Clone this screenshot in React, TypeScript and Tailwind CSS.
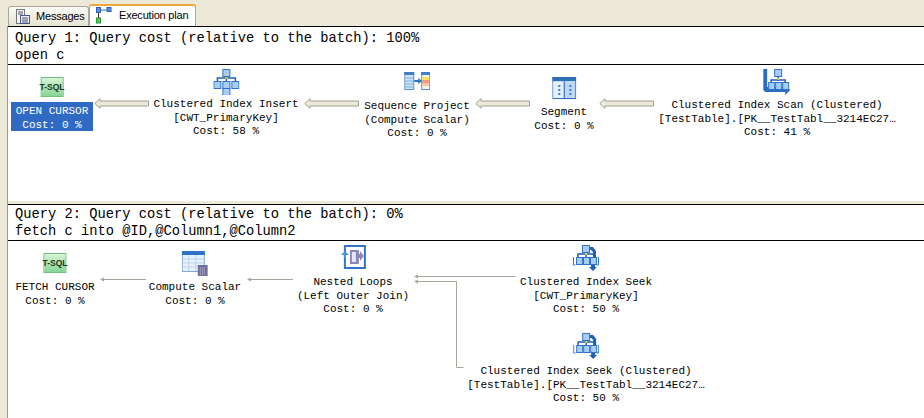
const Box = ({ x, y, w = 7, h = 7 }: { x: number; y: number; w?: number; h?: number }) => (
  <rect x={x + 0.5} y={y + 0.5} width={w} height={h} fill="#a9cdf2" stroke="#2f74c8" />
);

const InsertIcon = () => (
  <svg width="26" height="26" viewBox="0 0 26 26">
    <path d="M13 6v16M4 13V9h18v4" fill="none" stroke="#1f5fb0" strokeWidth="1.5" />
    <path d="M12 8h2v2h-2z" fill="#d8d030" />
    <Box x={9} y={0} />
    <Box x={0} y={12} />
    <Box x={9} y={12} />
    <Box x={18} y={12} />
    <Box x={9} y={19} />
  </svg>
);

const SeekIcon = () => (
  <svg width="26" height="26" viewBox="0 0 26 26">
    <path d="M16 2h4l3 4v6h-3V7l-2-2h-2z" fill="#1f62b8" />
    <path d="M13 6v6M5 13V9h16v4" fill="none" stroke="#1f5fb0" strokeWidth="1.5" />
    <path d="M12 8h2v2h-2z" fill="#d8d030" />
    <Box x={9} y={0} />
    <path d="M.5 12v8h2" fill="none" stroke="#2f74c8" />
    <path d="M25.5 12v8h-2" fill="none" stroke="#2f74c8" />
    <Box x={3} y={12} w={6} />
    <Box x={10} y={12} w={6} />
    <Box x={17} y={12} w={6} />
    <path d="M18 20h4v2h2l-4 4-4-4h2z" fill="#1f62b8" />
  </svg>
);

const ScanIcon = () => (
  <svg width="28" height="27" viewBox="0 0 28 27">
    <path d="M0 0h4v18h18v-2l5 5-5 5v-3H2l-2-2z" fill="#2a6cc4" />
    <path d="M15 7v5M8 14v-3h14v3" fill="none" stroke="#1f5fb0" strokeWidth="1.5" />
    <path d="M14 9h2v2h-2z" fill="#d8d030" />
    <Box x={11} y={0} />
    <Box x={5} y={13} w={6} />
    <Box x={12} y={13} w={6} />
    <Box x={19} y={13} w={6} />
  </svg>
);

const SequenceIcon = () => (
  <svg width="26" height="19" viewBox="0 0 26 19">
    <rect x="0.5" y="0.5" width="9" height="17" fill="#cfe3f7" stroke="#5b92cf" />
    <rect x="0" y="0" width="10" height="3" fill="#3f7fc8" />
    <path d="M1 6h8M1 9h8M1 12h8M1 15h8" stroke="#7fb0e0" />
    <rect x="17.5" y="0.5" width="8" height="17" fill="#f4f4ea" stroke="#5b92cf" />
    <rect x="17" y="0" width="9" height="3" fill="#3f7fc8" />
    <rect x="18" y="5" width="7" height="3" fill="#f3e56a" />
    <rect x="18" y="8" width="7" height="3" fill="#f29a80" />
    <rect x="18" y="11" width="7" height="3" fill="#f6c9a8" />
    <path d="M10 9h6" stroke="#2f74c8" strokeWidth="2" />
    <path d="M14 6l4 3-4 3z" fill="#2f74c8" />
  </svg>
);

const SegmentIcon = () => (
  <svg width="24" height="22" viewBox="0 0 24 22">
    <rect x="0.5" y="0.5" width="23" height="21" fill="#bcd8f4" stroke="#2f6fb8" />
    <rect x="0" y="0" width="24" height="4" fill="#2f6fb8" />
    <rect x="1" y="5" width="10" height="16" fill="#e6f0fa" />
    <path d="M12 1v20" stroke="#2f6fb8" />
    <path d="M6 8h2v2H6zM6 12h2v2H6zM6 16h2v2H6zM17 8h2v2h-2zM17 12h2v2h-2zM17 16h2v2h-2z" fill="#3f7fc8" />
  </svg>
);

const ComputeIcon = () => (
  <svg width="26" height="25" viewBox="0 0 26 25">
    <rect x="0.5" y="0.5" width="22" height="20" fill="#e8f1fb" stroke="#7fa8d8" />
    <rect x="0" y="0" width="23" height="4" fill="#2f74c8" />
    <path d="M1 8h21M1 12h21M1 16h21M7 4v16M14 4v16" stroke="#bcd3ec" />
    <rect x="16" y="14" width="10" height="11" fill="#6f6f99" />
    <path d="M18 17h6M18 19h6M18 21h6M18 23h6" stroke="#c8c8dc" strokeDasharray="1 1" />
  </svg>
);

const LoopsIcon = () => (
  <svg width="25" height="24" viewBox="0 0 25 24">
    <rect x="4" y="1" width="20" height="22" fill="#fff" stroke="#2f74c8" strokeWidth="2" />
    <rect x="9" y="5" width="9" height="14" fill="#8f86b8" />
    <rect x="11" y="7" width="4" height="10" fill="#e8e6f2" />
    <path d="M15 9h4V6l4 5-4 5v-3h-4z" fill="#8f86b8" />
    <path d="M0 10l4-4 4 4H5v3H3v-3z" fill="#3f97e0" />
  </svg>
);

const TsqlIcon = () => (
  <div className="flex h-[20px] w-[23px] items-center justify-center border border-[#6fbf7f] bg-gradient-to-b from-[#d6f3d4] to-[#86d694] font-['Liberation_Sans',sans-serif] text-[8.5px] font-bold leading-none text-[#1d3a22]">
    T-SQL
  </div>
);

const FlowArrow = ({ className }: { className: string }) => (
  <svg className={`absolute ${className}`} width="55" height="11" viewBox="0 0 55 11">
    <path d="M.8 5.5L6 .7v2.3h48.5v5H6v2.3z" fill="#ece9d8" stroke="#a09e90" />
  </svg>
);

const ThinArrow = ({ className }: { className: string }) => (
  <svg className={`absolute ${className}`} width="46" height="5" viewBox="0 0 46 5">
    <path d="M4 2.5h42" stroke="#a8a69a" strokeWidth="1" />
    <path d="M0 2.5L4 .5v4z" fill="#a8a69a" />
  </svg>
);

const Node = ({
  className,
  icon,
  lines,
}: {
  className: string;
  icon: React.ReactNode;
  lines: string[];
}) => (
  <div className={`absolute flex -translate-x-1/2 flex-col items-center whitespace-nowrap text-[11px] leading-[13.5px] text-black ${className}`}>
    {icon}
    <div className="text-center">
      {lines.map((line) => (
        <div key={line}>{line}</div>
      ))}
    </div>
  </div>
);

const QueryHeader = ({ title, sql, top }: { title: string; sql: string; top: string }) => (
  <div className={`border-b border-t border-black pl-[7px] text-[13.75px] leading-[17px] text-black ${top}`}>
    <div>{title}</div>
    <div>{sql}</div>
  </div>
);

export default function App() {
  return (
    <div className="flex h-[418px] w-[924px] flex-col overflow-hidden bg-[#ece9d8] font-['Liberation_Mono',monospace]">
      {/* tabs */}
      <div className="flex h-[26px] items-end whitespace-nowrap pl-2 font-['Liberation_Sans',sans-serif] text-[11px] tracking-[-0.2px] text-black">
        <div className="flex h-[20px] w-[81px] items-center gap-[6px] rounded-t-[3px] border border-b-0 border-[#aca899] bg-gradient-to-b from-[#fbfbf8] to-[#e6e3d3] pl-[7px]">
          <svg width="14" height="15" viewBox="0 0 14 15">
            <rect x="0.5" y="0.5" width="8" height="14" fill="#f4f4f4" stroke="#777" />
            <rect x="4.5" y="6.5" width="9" height="8" fill="#e9eef8" stroke="#445a8a" />
            <path d="M2 3h5M2 5h5M6 9h6M6 11h6M6 13h6" stroke="#556" />
          </svg>
          <span>Messages</span>
        </div>
        <div className="flex h-[22px] w-[107px] items-center rounded-t-[3px] border-x border-t-2 border-[#aca899] border-t-[#f0a83c] bg-white pl-[6px]">
          <svg width="16" height="17" viewBox="0 0 16 17" className="-mt-[1px]">
            <rect x="0.5" y="0.5" width="4" height="5" fill="#5b8fe0" stroke="#2f5fb0" />
            <rect x="11" y="0.5" width="4" height="4" fill="#5b8fe0" stroke="#2f5fb0" />
            <path d="M5 3h6" stroke="#3a6fc4" />
            <rect x="0.5" y="11" width="4" height="5" fill="#58c85a" stroke="#2e9a30" />
            <path d="M2.5 6v5" stroke="#333" />
          </svg>
          <span className="ml-[7px] -mt-[1px]">Execution plan</span>
        </div>
      </div>

      <div className="ml-[7px] flex flex-1 flex-col border-l border-[#9d9a8a] bg-white">
        <QueryHeader
          title="Query 1: Query cost (relative to the batch): 100%"
          sql="open c"
          top="pt-[3px]"
        />

        {/* first plan, y offsets are from 65 */}
        <div className="relative h-[136px] bg-white">
          <FlowArrow className="left-[86px] top-[33px]" />
          <FlowArrow className="left-[296px] top-[33px]" />
          <FlowArrow className="left-[467px] top-[33px]" />
          <FlowArrow className="left-[591px] top-[33px]" />

          <div className="absolute left-[3px] top-[37px] h-[29px] w-[82px] bg-[#316ac5]" />
          <Node
            className="left-[44px] top-[12px] gap-[8px] [&>div:last-child]:text-white"
            icon={<TsqlIcon />}
            lines={["OPEN CURSOR", "Cost: 0 %"]}
          />
          <Node
            className="left-[218px] top-[4px] gap-[3px]"
            icon={<InsertIcon />}
            lines={["Clustered Index Insert", "[CWT_PrimaryKey]", "Cost: 58 %"]}
          />
          <Node
            className="left-[409px] top-[7px] gap-[9px]"
            icon={<SequenceIcon />}
            lines={["Sequence Project", "(Compute Scalar)", "Cost: 0 %"]}
          />
          <Node
            className="left-[556px] top-[12px] gap-[7px]"
            icon={<SegmentIcon />}
            lines={["Segment", "Cost: 0 %"]}
          />
          <Node
            className="left-[769px] top-[4px] gap-[3px]"
            icon={<ScanIcon />}
            lines={[
              "Clustered Index Scan (Clustered)",
              "[TestTable].[PK__TestTabl__3214EC27…",
              "Cost: 41 %",
            ]}
          />
        </div>

        <div className="h-[3px] bg-[#ece9d8]" />

        <QueryHeader
          title="Query 2: Query cost (relative to the batch): 0%"
          sql="fetch c into @ID,@Column1,@Column2"
          top="pt-[1px]"
        />

        {/* second plan, y offsets are from 241 */}
        <div className="relative flex-1 bg-white">
          <ThinArrow className="left-[92px] top-[36px]" />
          <ThinArrow className="left-[239px] top-[36px]" />
          <svg className="absolute left-[406px] top-[31px]" width="110" height="100" viewBox="0 0 110 100">
            <path d="M4 4.5h98M4 9.5h38.5v86h7" fill="none" stroke="#a8a69a" />
            <path d="M0 4.5l4-2v4zM0 9.5l4-2v4z" fill="#a8a69a" />
          </svg>

          <Node
            className="left-[47px] top-[12px] gap-[8px]"
            icon={<TsqlIcon />}
            lines={["FETCH CURSOR", "Cost: 0 %"]}
          />
          <Node
            className="left-[187px] top-[10px] gap-[5px]"
            icon={<ComputeIcon />}
            lines={["Compute Scalar", "Cost: 0 %"]}
          />
          <Node
            className="left-[345px] top-[4px] gap-[7px]"
            icon={<LoopsIcon />}
            lines={["Nested Loops", "(Left Outer Join)", "Cost: 0 %"]}
          />
          <Node
            className="left-[578px] top-[4px] gap-[5px]"
            icon={<SeekIcon />}
            lines={["Clustered Index Seek", "[CWT_PrimaryKey]", "Cost: 50 %"]}
          />
          <Node
            className="left-[578px] top-[92px] gap-[6px]"
            icon={<SeekIcon />}
            lines={[
              "Clustered Index Seek (Clustered)",
              "[TestTable].[PK__TestTabl__3214EC27…",
              "Cost: 50 %",
            ]}
          />
        </div>
      </div>
    </div>
  );
}
